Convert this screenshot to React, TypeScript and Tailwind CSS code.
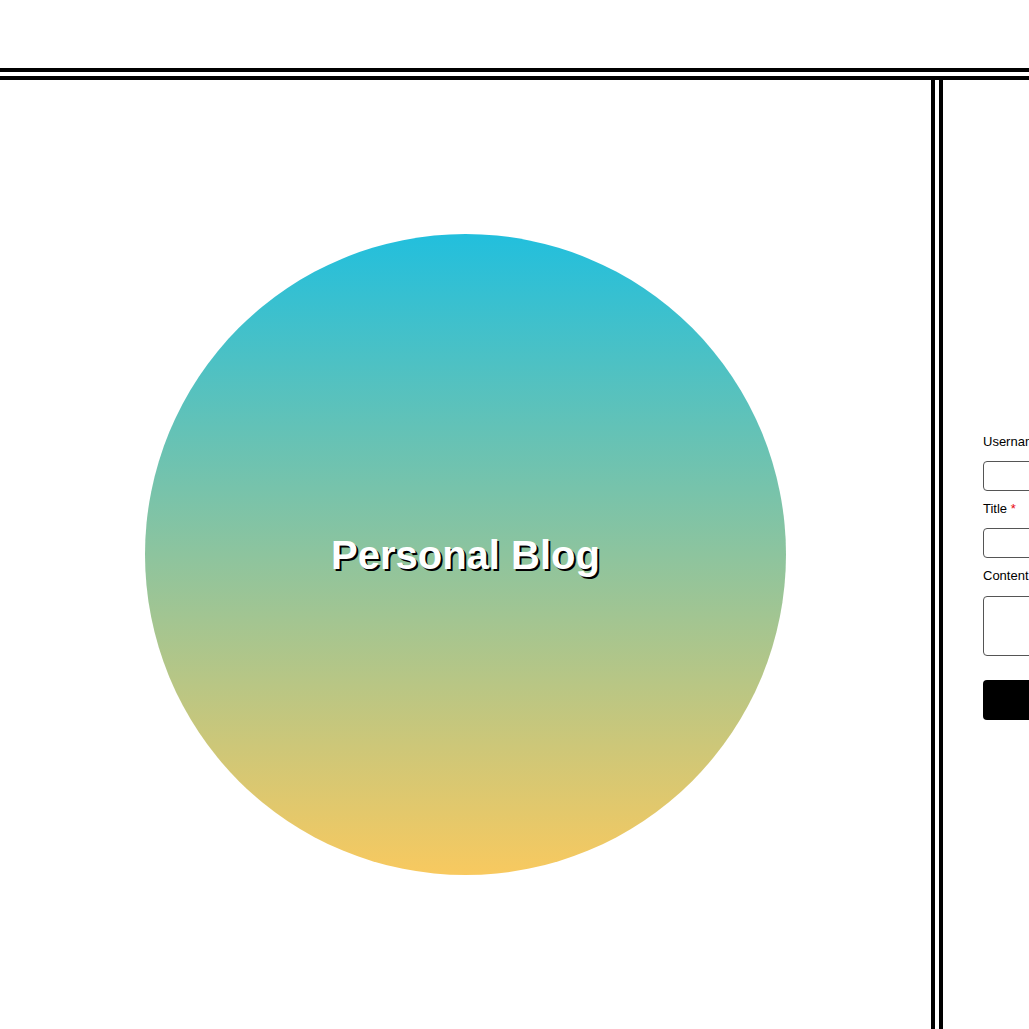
export default function App() {
  return (
    <div className="h-[1029px] w-[1029px] overflow-hidden bg-white font-['Liberation_Sans',Arial,sans-serif] text-black">
      <header className="h-[80px] border-b-[12px] border-double border-black" />
      <main className="flex h-[949px]">
        <section className="flex w-[931px] shrink-0 items-center justify-center">
          <div className="flex h-[641px] w-[641px] items-center justify-center rounded-full bg-[linear-gradient(to_bottom,#22bfdd,#f8c95f)]">
            <h1 className="text-[40px] font-bold text-white [text-shadow:2px_2px_0_#000]">
              Personal Blog
            </h1>
          </div>
        </section>
        <aside className="w-[340px] shrink-0 border-l-[12px] border-double border-black px-10 pt-[354px]">
          <form className="flex flex-col text-[13px]">
            <label className="mb-[12px] leading-[15px]">Username</label>
            <input className="mb-[10px] h-[30px] rounded border border-[#555] px-2" />
            <label className="mb-[12px] leading-[15px]">
              Title <span className="text-red-600">*</span>
            </label>
            <input className="mb-[10px] h-[30px] rounded border border-[#555] px-2" />
            <label className="mb-[13px] leading-[15px]">Content</label>
            <textarea className="mb-[24px] h-[60px] resize-none rounded border border-[#555] px-2" />
            <button
              type="submit"
              className="h-[40px] rounded bg-black text-[14px] font-semibold text-white"
            >
              Submit
            </button>
          </form>
        </aside>
      </main>
    </div>
  );
}
